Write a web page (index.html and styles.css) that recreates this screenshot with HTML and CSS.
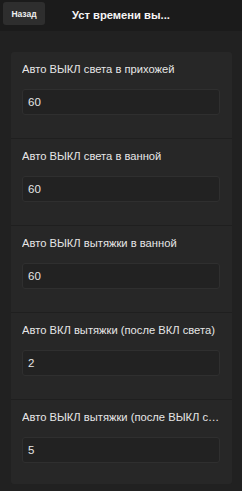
FILE: index.html
```html
<!DOCTYPE html>
<html>
<head>
<meta charset="utf-8">
<link rel="stylesheet" href="styles.css">
</head>
<body>
<div class="header">
  <button class="back">Назад</button>
  <div class="title">Уст времени вы...</div>
</div>
<div class="card">
  <div class="section">
    <div class="label">Авто ВЫКЛ света в прихожей</div>
    <div class="input">60</div>
  </div>
  <div class="section">
    <div class="label">Авто ВЫКЛ света в ванной</div>
    <div class="input">60</div>
  </div>
  <div class="section">
    <div class="label">Авто ВЫКЛ вытяжки в ванной</div>
    <div class="input">60</div>
  </div>
  <div class="section">
    <div class="label">Авто ВКЛ вытяжки (после ВКЛ света)</div>
    <div class="input">2</div>
  </div>
  <div class="section">
    <div class="label">Авто ВЫКЛ вытяжки (после ВЫКЛ света)</div>
    <div class="input">5</div>
  </div>
</div>
</body>
</html>
```
FILE: styles.css
```css
html, body {
  margin: 0;
  padding: 0;
  background: #212121;
  font-family: "Liberation Sans", Arial, sans-serif;
  color: #e8e8e8;
}
.header {
  height: 31px;
  background: #1b1b1b;
  display: flex;
  align-items: flex-start;
  box-sizing: border-box;
}
.back {
  margin: 2px 0 0 3px;
  width: 42px;
  height: 23px;
  padding: 0;
  border: none;
  border-radius: 3px;
  background: #2e2e2e;
  color: #f0f0f0;
  font-family: "Liberation Sans", Arial, sans-serif;
  font-size: 8.5px;
  font-weight: bold;
}
.title {
  margin-left: 27px;
  line-height: 30px;
  font-size: 11.2px;
  font-weight: bold;
  color: #f5f5f5;
}
.card {
  margin: 21px 0 0 11px;
  width: 221px;
  background: #272727;
  border-radius: 3px;
}
.section {
  padding: 10px 8px 23px 11px;
  border-bottom: 1px solid #1f1f1f;
}
.section:last-child {
  border-bottom: none;
  padding-bottom: 21px;
}
.label {
  font-size: 11.2px;
  line-height: 14px;
  white-space: nowrap;
  overflow: hidden;
  text-overflow: ellipsis;
  color: #e6e6e6;
}
.input {
  margin-top: 13px;
  height: 26px;
  width: 198px;
  box-sizing: border-box;
  border: 1px solid #2f2f2f;
  border-radius: 3px;
  background: #222222;
  padding-left: 5px;
  font-size: 11.5px;
  line-height: 24px;
  color: #e6e6e6;
}
```
